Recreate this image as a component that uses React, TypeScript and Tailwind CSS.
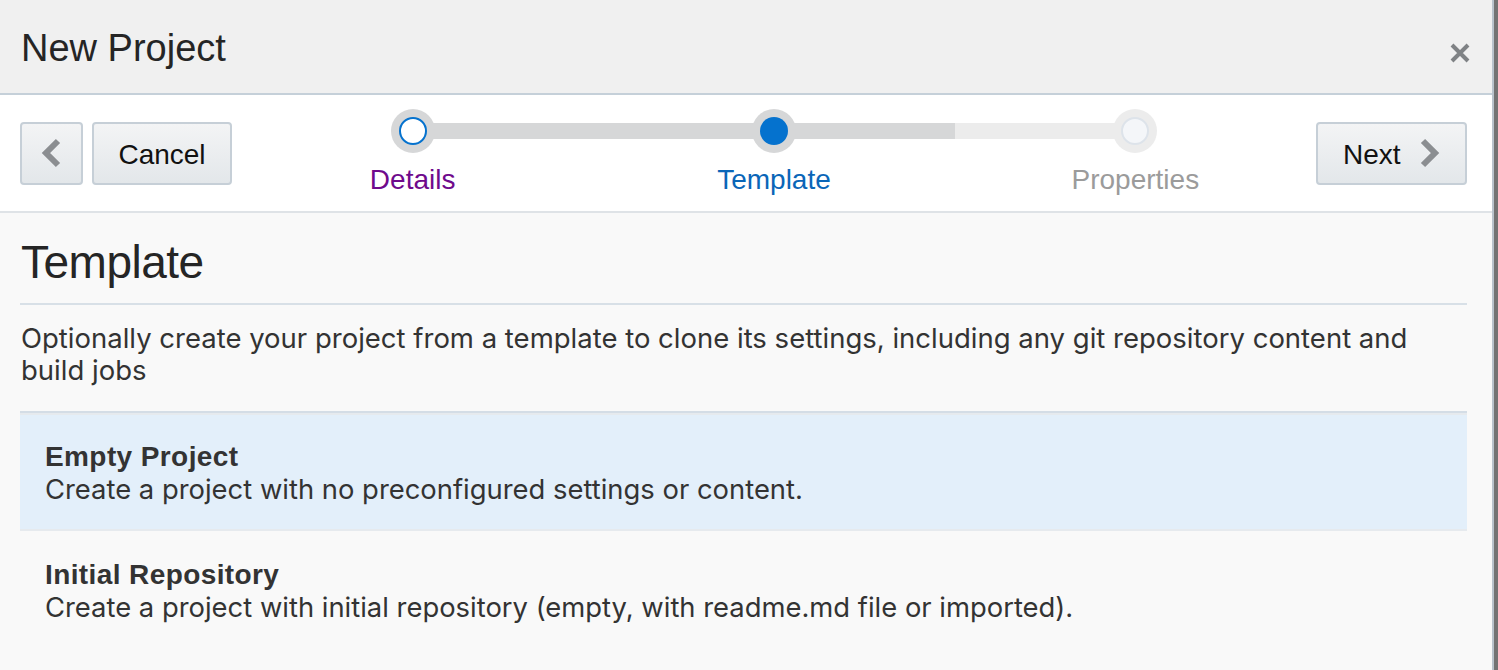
import React from "react";

const font = { fontFamily: '"Liberation Sans", Arial, sans-serif' };
const inter = { fontFamily: 'Inter, "Liberation Sans", Arial, sans-serif' };

function ChevronLeft() {
  return (
    <svg width="22" height="30" viewBox="0 0 22 30" fill="none">
      <path d="M18 3 L6 15 L18 27" stroke="#8b8e91" strokeWidth="6" strokeLinejoin="miter" />
    </svg>
  );
}

function ChevronRight() {
  return (
    <svg width="22" height="30" viewBox="0 0 22 30" fill="none">
      <path d="M4 3 L16 15 L4 27" stroke="#8b8e91" strokeWidth="6" strokeLinejoin="miter" />
    </svg>
  );
}

function CloseX() {
  return (
    <svg width="22" height="22" viewBox="0 0 22 22" fill="none">
      <path d="M3 3 L19 19 M19 3 L3 19" stroke="#7f8285" strokeWidth="4" />
    </svg>
  );
}

const btn =
  "h-[63px] rounded-[4px] border-2 border-[#c6cfd7] bg-gradient-to-b from-[#f3f4f5] to-[#e3e7ea] flex items-center text-[28px] text-[#111]";

type StopProps = {
  label: string;
  labelColor: string;
  left: string;
  right: string;
  kind: "visited" | "current" | "disabled";
};

function Stop({ label, labelColor, left, right, kind }: StopProps) {
  return (
    <div className="flex flex-col items-stretch">
      <div className="relative h-[44px] flex items-center">
        <div className={`h-[16px] flex-1 ${left}`} />
        <div className={`h-[16px] flex-1 ${right}`} />
        <div
          className={`absolute left-1/2 top-0 -translate-x-1/2 w-[44px] h-[44px] rounded-full flex items-center justify-center ${
            kind === "disabled" ? "bg-[#ececec]" : "bg-[#d6d7d8]"
          }`}
        >
          {kind === "visited" && (
            <div className="w-[28px] h-[28px] rounded-full bg-white border-2 border-[#0572ce]" />
          )}
          {kind === "current" && <div className="w-[28px] h-[28px] rounded-full bg-[#0572ce]" />}
          {kind === "disabled" && (
            <div className="w-[28px] h-[28px] rounded-full bg-[#f4f6f9] border-2 border-[#dde3ea]" />
          )}
        </div>
      </div>
      <div className={`mt-[11px] text-center text-[28px] leading-[32px] ${labelColor}`}>{label}</div>
    </div>
  );
}

export default function App() {
  return (
    <div className="w-[1498px] h-[670px] bg-[#737373] overflow-hidden" style={font}>
      <div className="w-[1494px] h-[670px] border-r-2 border-[#b9c3cc] bg-[#f9f9f9] flex flex-col">
        {/* Header */}
        <div className="h-[95px] shrink-0 bg-[#f0f0f0] border-b-2 border-[#c5d0d9] flex items-start justify-between pl-[21px] pr-[21px]">
          <div className="pt-[26px] text-[38px] leading-[44px] text-[#252525]">New Project</div>
          <div className="pt-[42px]">
            <CloseX />
          </div>
        </div>

        {/* Toolbar */}
        <div className="h-[118px] shrink-0 bg-white border-b-2 border-[#dfe3e7] flex items-center pl-[20px] pr-[25px]">
          <div className="flex items-center gap-[9px]">
            <button className={`${btn} w-[63px] justify-center pr-[2px]`}>
              <ChevronLeft />
            </button>
            <button className={`${btn} w-[140px] justify-center pt-[3px]`}>Cancel</button>
          </div>
          <div className="flex-1 grid grid-cols-3 pb-[1px]">
            <Stop label="Details" labelColor="text-[#6f0a8c]" left="" right="bg-[#d6d7d8]" kind="visited" />
            <Stop label="Template" labelColor="text-[#0a66b8]" left="bg-[#d6d7d8]" right="bg-[#d6d7d8]" kind="current" />
            <Stop label="Properties" labelColor="text-[#9b9b9b]" left="bg-[#ececec]" right="" kind="disabled" />
          </div>
          <button className={`${btn} w-[151px] pl-[25px] gap-[18px]`}>
            <span className="pt-[3px]">Next</span>
            <ChevronRight />
          </button>
        </div>

        {/* Content */}
        <div className="flex-1 pl-[20px] pr-[25px] text-[#333]">
          <div className="mt-[23px] pl-[1px] pb-[15px] border-b-2 border-[#d8e0e7] text-[46px] leading-[52px] tracking-[-0.5px] text-[#252525]">
            Template
          </div>
          <p className="mt-[17px] pl-[1px] text-[27.5px] leading-[32px] text-[#333]" style={inter}>
            Optionally create your project from a template to clone its settings, including any git repository content and
            build jobs
          </p>
          <div className="mt-[25px] border-t-2 border-[#d4dde6]">
            <div className="bg-[#e3effa] border-t-2 border-b-2 border-[#e6eaee] pl-[25px] pt-[26px] pb-[24px]">
              <div className="text-[28px] leading-[32px] font-bold tracking-[0.4px] text-[#333]">Empty Project</div>
              <div className="text-[27.4px] leading-[32px] text-[#333]" style={inter}>
                Create a project with no preconfigured settings or content.
              </div>
            </div>
            <div className="pl-[25px] pt-[28px] pb-[26px]">
              <div className="text-[28px] leading-[32px] font-bold tracking-[0.4px] text-[#333]">Initial Repository</div>
              <div className="text-[27.4px] leading-[32px] text-[#333]" style={inter}>
                Create a project with initial repository (empty, with readme.md file or imported).
              </div>
            </div>
          </div>
        </div>
      </div>
    </div>
  );
}
